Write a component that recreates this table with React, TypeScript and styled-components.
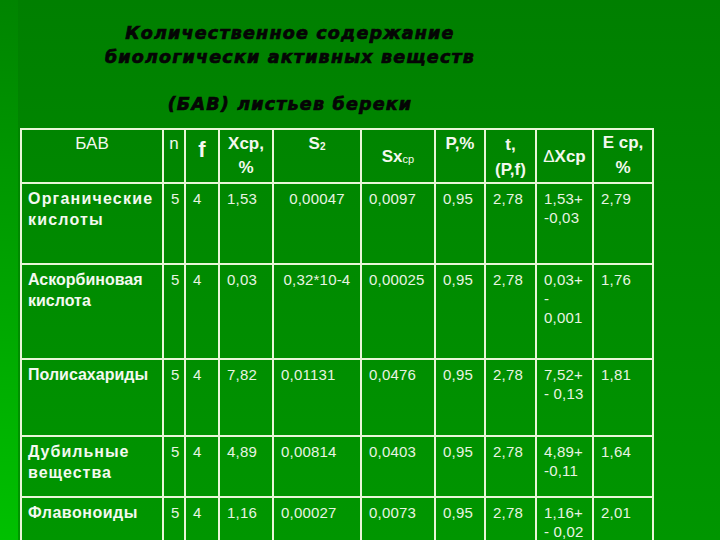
import React from 'react';
import styled, { createGlobalStyle } from 'styled-components';

const GlobalStyle = createGlobalStyle`
  html, body {
    margin: 0;
    padding: 0;
  }
  body {
    width: 720px;
    height: 540px;
    overflow: hidden;
    background: #008800;
  }
`;

const Slide = styled.div`
  width: 720px;
  height: 540px;
  overflow: hidden;
  box-sizing: border-box;
  padding: 22px 0 0 20px;
  background:
    linear-gradient(to bottom, #008400 0%, #00a200 50%, #00c000 100%) left top / 18px 100% no-repeat,
    linear-gradient(to bottom, #007f00 0%, #008600 30%, #008f00 70%, #009600 100%);
  font-family: 'Liberation Sans', Arial, sans-serif;
`;

const Title = styled.h1`
  margin: 0;
  width: 540px;
  text-align: center;
  font-family: 'DejaVu Sans', 'Liberation Sans', sans-serif;
  font-weight: bold;
  font-style: italic;
  font-size: 17.5px;
  line-height: 23.5px;
  letter-spacing: 1.2px;
  color: #050505;
  -webkit-text-stroke: 0.7px #050505;
`;

const Table = styled.table`
  border-collapse: collapse;
  table-layout: fixed;
  width: 632px;
  margin-top: 12px;
  color: #f3f8ee;
`;

const Row = styled.tr<{ $h: number }>`
  height: ${({ $h }) => $h}px;
`;

const HeadCell = styled.th<{ $mid?: boolean; $lh?: number; $pt?: number }>`
  border: 2px solid #e8f6d8;
  padding: ${({ $pt }) => $pt ?? 2}px 2px 0;
  font-size: 17px;
  font-weight: bold;
  line-height: ${({ $lh }) => $lh ?? 24}px;
  text-align: center;
  vertical-align: ${({ $mid }) => ($mid ? 'middle' : 'top')};
`;

const Light = styled.span<{ $size?: number }>`
  font-weight: normal;
  font-size: ${({ $size }) => $size ?? 17}px;
`;

const Sub = styled.sub<{ $bold?: boolean; $size: number }>`
  font-size: ${({ $size }) => $size}px;
  font-weight: ${({ $bold }) => ($bold ? 'bold' : 'normal')};
  vertical-align: baseline;
  position: relative;
  top: 1px;
`;

const BigF = styled.span`
  font-size: 22px;
`;

const LabelCell = styled.td<{ $ls: number }>`
  border: 2px solid #e8f6d8;
  padding: 4px 2px 0 6px;
  font-size: 16px;
  font-weight: bold;
  line-height: 21px;
  letter-spacing: ${({ $ls }) => $ls}px;
  vertical-align: top;
  color: #f4f9f0;
`;

const NumCell = styled.td<{ $center?: boolean }>`
  border: 2px solid #e8f6d8;
  padding: 5px 1px 0 ${({ $center }) => ($center ? 1 : 7)}px;
  font-size: 15px;
  line-height: 19px;
  letter-spacing: 0.2px;
  text-align: ${({ $center }) => ($center ? 'center' : 'left')};
  vertical-align: top;
  color: #e8f4e2;
`;

const cols = [142, 22, 34, 54, 88, 74, 50, 51, 57, 60];

type DataRow = {
  label: string;
  ls: number;
  h: number;
  xcp: string;
  s2: string;
  s2Center?: boolean;
  sx: string;
  dx: string[];
  e: string;
};

const rows: DataRow[] = [
  { label: 'Органические кислоты', ls: 1.2, h: 81, xcp: '1,53', s2: '0,00047', s2Center: true, sx: '0,0097', dx: ['1,53+', '-0,03'], e: '2,79' },
  { label: 'Аскорбиновая кислота', ls: 0, h: 95, xcp: '0,03', s2: '0,32*10-4', s2Center: true, sx: '0,00025', dx: ['0,03+', '-', '0,001'], e: '1,76' },
  { label: 'Полисахариды', ls: 0, h: 77, xcp: '7,82', s2: '0,01131', sx: '0,0476', dx: ['7,52+', '- 0,13'], e: '1,81' },
  { label: 'Дубильные вещества', ls: 1, h: 61, xcp: '4,89', s2: '0,00814', sx: '0,0403', dx: ['4,89+', '-0,11'], e: '1,64' },
  { label: 'Флавоноиды', ls: 0.5, h: 60, xcp: '1,16', s2: '0,00027', sx: '0,0073', dx: ['1,16+', '- 0,02'], e: '2,01' },
];

const App = () => {
  return (
    <Slide>
      <GlobalStyle />
      <Title>
        Количественное содержание
        <br />
        биологически активных веществ
        <br />
        <br />
        (БАВ) листьев береки
      </Title>
      <Table>
        <colgroup>
          {cols.map((w, i) => (
            <col key={i} style={{ width: w }} />
          ))}
        </colgroup>
        <thead>
          <Row $h={54}>
            <HeadCell><Light>БАВ</Light></HeadCell>
            <HeadCell><Light>n</Light></HeadCell>
            <HeadCell $pt={8}><BigF>f</BigF></HeadCell>
            <HeadCell>Xcp,<br />%</HeadCell>
            <HeadCell>S<Sub $bold $size={10}>2</Sub></HeadCell>
            <HeadCell $mid>Sx<Sub $size={11}>cp</Sub></HeadCell>
            <HeadCell>P,%</HeadCell>
            <HeadCell $lh={25} $pt={2}>t,<br />(P,f)</HeadCell>
            <HeadCell $mid><Light>Δ</Light>Xcp</HeadCell>
            <HeadCell $lh={25} $pt={0}>E cp,<br />%</HeadCell>
          </Row>
        </thead>
        <tbody>
          {rows.map((r) => (
            <Row key={r.label} $h={r.h}>
              <LabelCell $ls={r.ls}>{r.label}</LabelCell>
              <NumCell>5</NumCell>
              <NumCell>4</NumCell>
              <NumCell>{r.xcp}</NumCell>
              <NumCell $center={r.s2Center}>{r.s2}</NumCell>
              <NumCell>{r.sx}</NumCell>
              <NumCell>0,95</NumCell>
              <NumCell>2,78</NumCell>
              <NumCell>
                {r.dx.map((line, i) => (
                  <div key={i}>{line}</div>
                ))}
              </NumCell>
              <NumCell>{r.e}</NumCell>
            </Row>
          ))}
        </tbody>
      </Table>
    </Slide>
  );
};

export default App;
